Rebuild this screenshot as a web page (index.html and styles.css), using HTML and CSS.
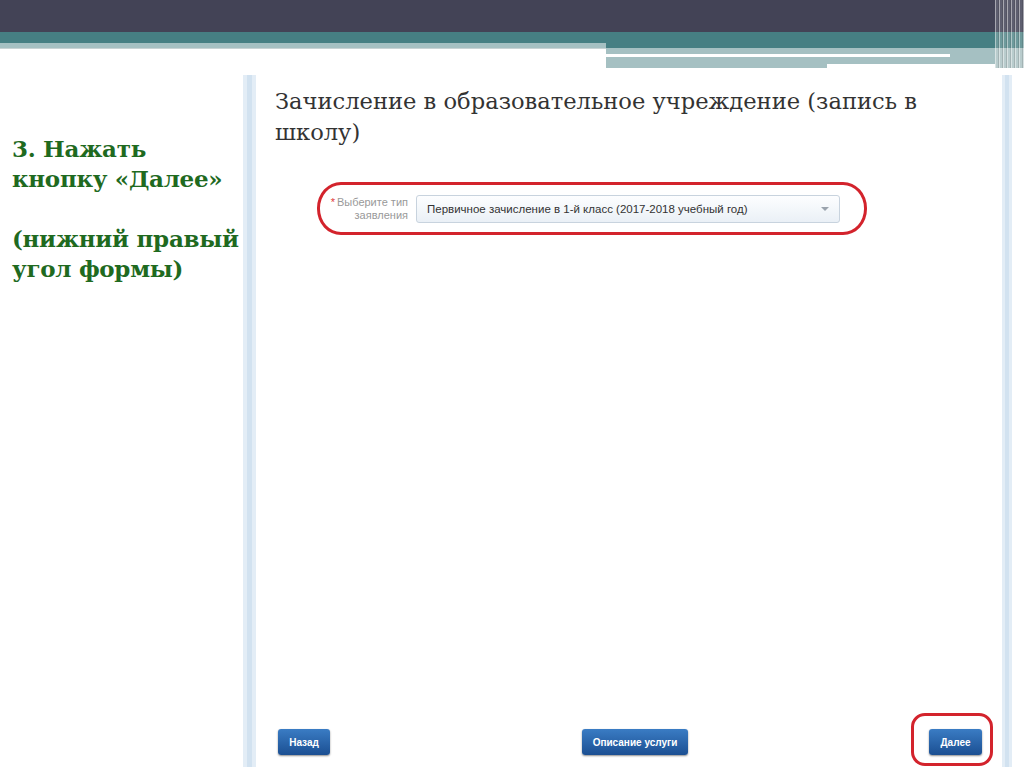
FILE: index.html
```html
<!DOCTYPE html>
<html lang="ru">
<head>
    <meta charset="UTF-8">
    <meta name="viewport" content="width=device-width, initial-scale=1.0">
    <title>Запись в школу</title>
    <link rel="stylesheet" href="styles.css">
</head>
<body>
<div class="page">

    <div class="header">
        <div class="header-main">
            <div class="band-dark"></div>
            <div class="bands">
                <div class="bands-left">
                    <div class="teal-short"></div>
                    <div class="light-short"></div>
                    <div class="thin-line"></div>
                </div>
                <div class="bands-right">
                    <div class="teal-long"></div>
                    <div class="gray-band"></div>
                    <div class="white-line"></div>
                    <div class="gray-band2"></div>
                    <div class="gray-tail"></div>
                </div>
            </div>
        </div>
        <div class="header-edge"></div>
    </div>

    <div class="main">
        <div class="hint">
            <p>3. Нажать<br>кнопку «Далее»<br><br>(нижний правый<br>угол формы)</p>
        </div>

        <div class="side-bar"></div>

        <div class="form">
            <h1 class="form-title">Зачисление в образовательное учреждение (запись в школу)</h1>

            <div class="mark field-mark">
                <div class="field-label"><span class="req">*</span>Выберите тип<br>заявления</div>
                <div class="select">
                    <span>Первичное зачисление в 1-й класс (2017-2018 учебный год)</span>
                    <span class="arrow"></span>
                </div>
            </div>

            <div class="buttons">
                <button class="btn btn-back">Назад</button>
                <button class="btn btn-info">Описание услуги</button>
                <div class="mark next-mark">
                    <button class="btn btn-next">Далее</button>
                </div>
            </div>
        </div>

        <div class="side-bar side-bar-right"></div>
        <div class="edge-space"></div>
    </div>

</div>
</body>
</html>
```

FILE: styles.css
```css
* {
    margin: 0;
    padding: 0;
    box-sizing: border-box;
}
html, body {
    height: 767px;
    overflow: hidden;
    background: #fff;
}
body {
    font-family: "Liberation Sans", Arial, sans-serif;
}
.page {
    display: flex;
    flex-direction: column;
    height: 767px;
}

/* top stripes */
.header {
    display: flex;
    height: 68px;
}
.header-main {
    flex: 1;
}
.band-dark {
    height: 32px;
    background: #434356;
}
.bands {
    display: flex;
}
.bands-left {
    width: 606px;
}
.teal-short {
    height: 11px;
    background: #467f83;
}
.light-short {
    height: 5px;
    background: #a5c0c2;
}
.thin-line {
    height: 1px;
    background: #c9d3d4;
}
.bands-right {
    flex: 1;
}
.teal-long {
    height: 16px;
    background: #467f83;
}
.gray-band {
    height: 6px;
    background: #a5c0c2;
}
.white-line {
    height: 3px;
    background: linear-gradient(to right, #fff 344px, #a5c0c2 344px);
}
.gray-band2 {
    height: 7px;
    background: #a5c0c2;
}
.gray-tail {
    width: 221px;
    height: 4px;
    background: #a5c0c2;
}
.header-edge {
    width: 29px;
    height: 68px;
    background:
        repeating-linear-gradient(to right, rgba(255,255,255,0.45) 0 1px, transparent 1px 3px, rgba(0,0,0,0.12) 3px 4px),
        linear-gradient(to bottom, #5e5f70 0, #5e5f70 32px, #6e9a9c 32px, #6e9a9c 48px, #b9cccd 48px, #b9cccd 68px);
}

/* slide body */
.main {
    flex: 1;
    display: flex;
}
.hint {
    width: 243px;
    padding: 66px 0 0 12px;
}
.hint p {
    font-family: "DejaVu Serif", "Liberation Serif", serif;
    font-weight: bold;
    font-size: 23px;
    line-height: 30px;
    letter-spacing: -0.3px;
    color: #1f6a1f;
    text-align: left;
}
.side-bar {
    width: 13px;
    margin-top: 7px;
    background: linear-gradient(to right, #e3edf6 0, #e3edf6 4px, #d2e2f0 4px, #d2e2f0 9px, #e3edf6 9px);
}
.side-bar-right {
    width: 10px;
    background: linear-gradient(to right, #e3edf6 0, #e3edf6 3px, #d2e2f0 3px, #d2e2f0 7px, #e3edf6 7px);
}
.edge-space {
    width: 12px;
}
.form {
    flex: 1;
    display: flex;
    flex-direction: column;
    padding: 18px 0 1px 0;
}
.form-title {
    font-family: "DejaVu Serif", "Liberation Serif", serif;
    font-weight: normal;
    font-size: 22.6px;
    line-height: 31px;
    color: #333;
    margin-left: 19px;
    max-width: 680px;
}

/* red hand-drawn marks */
.mark {
    border: 3px solid #d3232c;
    border-radius: 24px / 26px;
}
.field-mark {
    display: flex;
    align-items: center;
    width: 550px;
    height: 53px;
    margin: 34px 0 0 61px;
    padding-left: 3px;
}
.field-label {
    width: 85px;
    font-size: 11px;
    line-height: 13px;
    color: #999;
    text-align: right;
}
.req {
    color: #e03a3a;
    margin-right: 2px;
}
.select {
    display: flex;
    align-items: center;
    justify-content: space-between;
    width: 424px;
    height: 28px;
    margin-left: 8px;
    padding: 0 10px 0 10px;
    border: 1px solid #c8d3de;
    border-radius: 3px;
    background: linear-gradient(to bottom, #fdfeff, #eaf0f6);
    font-size: 11.5px;
    color: #333;
}
.arrow {
    width: 0;
    height: 0;
    border-left: 4px solid transparent;
    border-right: 4px solid transparent;
    border-top: 4px solid #9aa3ad;
}

/* bottom buttons */
.buttons {
    margin-top: auto;
    display: flex;
    align-items: flex-end;
}
.btn {
    height: 26px;
    border: none;
    border-radius: 3px;
    background: linear-gradient(to bottom, #3a7cc4, #1b4f92);
    box-shadow: 0 1px 2px rgba(0, 0, 0, 0.45);
    color: #fff;
    font-family: "Liberation Sans", Arial, sans-serif;
    font-weight: bold;
    font-size: 10px;
}
.btn-back {
    width: 52px;
    margin: 0 0 11px 22px;
}
.btn-info {
    width: 106px;
    margin: 0 0 11px 252px;
}
.next-mark {
    margin-left: 223px;
    width: 82px;
    height: 53px;
    padding: 13px 0 0 15px;
    border-radius: 14px;
}
.btn-next {
    width: 53px;
}
```
